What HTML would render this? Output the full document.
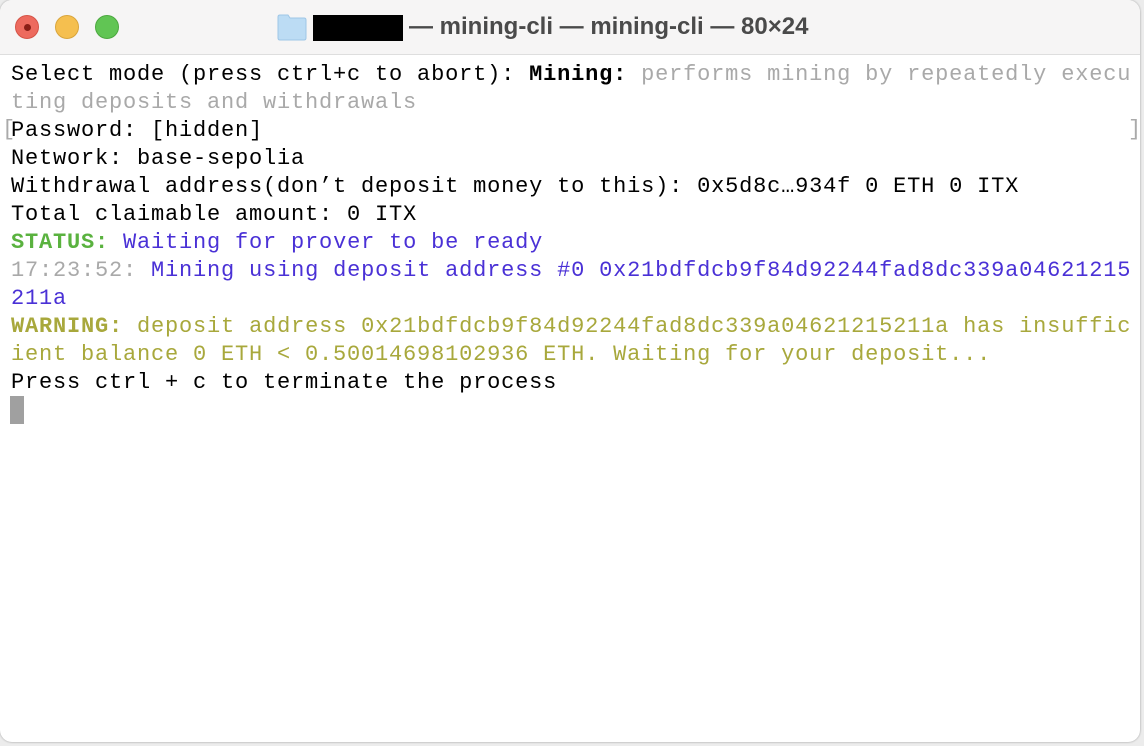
<!DOCTYPE html>
<html><head><meta charset="utf-8"><style>
html,body{margin:0;padding:0;width:1144px;height:746px;overflow:hidden;background:#ececec;}
.win{position:absolute;left:0;top:0;width:1140px;height:742px;background:#fff;border-radius:12px;overflow:hidden;box-shadow:0 0 2px rgba(0,0,0,.35);}
.tb{position:absolute;left:0;top:0;width:100%;height:54px;background:#f6f5f5;border-bottom:1px solid #dedede;}
.dot{position:absolute;top:15px;width:24px;height:24px;border-radius:50%;box-sizing:border-box;}
.title{position:absolute;top:13px;font:bold 24px "Liberation Sans",sans-serif;color:#4a4a4a;white-space:nowrap;}
.term{position:absolute;left:11px;top:61px;font-family:"Liberation Mono",monospace;font-size:22px;letter-spacing:0.8px;line-height:28px;white-space:pre;color:#000;}
.g{color:#a9a9a9}.b{font-weight:bold}.gr{color:#5ab23f;font-weight:bold}.bl{color:#4a31d6}.y{color:#a8a83c}.yb{color:#a8a83c;font-weight:bold}
</style></head><body>
<div class="win">
<div class="tb">
<div class="dot" style="left:15px;background:#ed6a5e;border:1px solid #d55447"><div style="position:absolute;left:8px;top:8px;width:7px;height:7px;border-radius:50%;background:#8a1e16"></div></div>
<div class="dot" style="left:55px;background:#f5bf4f;border:1px solid #d9a53c"></div>
<div class="dot" style="left:95px;background:#61c554;border:1px solid #4ca83f"></div>
<svg style="position:absolute;left:277px;top:13px" width="30" height="28"><path d="M1 4 Q1 2 3 2 H11 L13 5 H27 Q29 5 29 7 V25 Q29 27 27 27 H3 Q1 27 1 25 Z" fill="#bcdcf4" stroke="#9ec6e6"/></svg>
<div style="position:absolute;left:313px;top:15px;width:90px;height:26px;background:#000"></div>
<div class="title" style="left:409px">— mining-cli — mining-cli — 80×24</div>
</div>
<div class="term">Select mode (press ctrl+c to abort): <span class="b">Mining:</span> <span class="g">performs mining by repeatedly execu</span>
<span class="g">ting deposits and withdrawals</span>
Password: [hidden]
Network: base-sepolia
Withdrawal address(don’t deposit money to this): 0x5d8c…934f 0 ETH 0 ITX
Total claimable amount: 0 ITX
<span class="gr">STATUS:</span> <span class="bl">Waiting for prover to be ready</span>
<span class="g">17:23:52:</span> <span class="bl">Mining using deposit address #0 0x21bdfdcb9f84d92244fad8dc339a04621215</span>
<span class="bl">211a</span>
<span class="yb">WARNING:</span> <span class="y">deposit address 0x21bdfdcb9f84d92244fad8dc339a04621215211a has insuffic</span>
<span class="y">ient balance 0 ETH &lt; 0.50014698102936 ETH. Waiting for your deposit...</span>
Press ctrl + c to terminate the process</div>
<div style="position:absolute;left:2px;top:117px;font:22px 'Liberation Mono',monospace;color:#aaa">[</div>
<div style="position:absolute;left:1128px;top:117px;font:22px 'Liberation Mono',monospace;color:#aaa">]</div>
<div style="position:absolute;left:10px;top:396px;width:14px;height:28px;background:#a0a0a0"></div>
</div>
</body></html>
